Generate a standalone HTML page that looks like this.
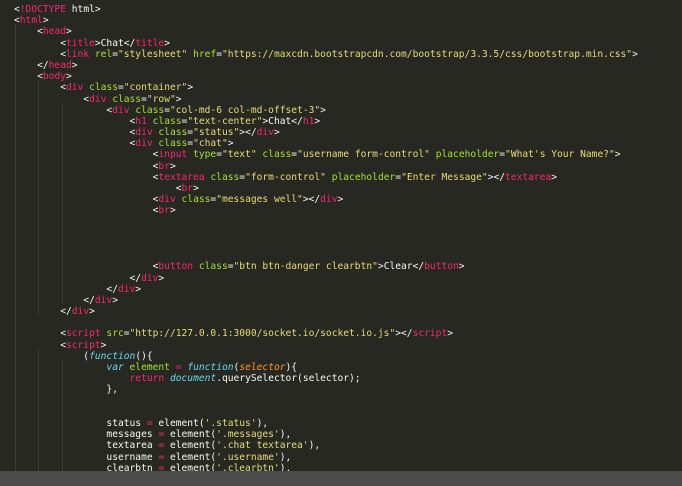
<!DOCTYPE html>
<html><head><style>
html,body{margin:0;padding:0;background:#272822;width:682px;height:486px;overflow:hidden}
pre{margin:0;position:absolute;left:14px;top:4px;font-family:"DejaVu Sans Mono","Liberation Mono",monospace;font-size:9.6px;line-height:11.18px;color:#f8f8f2;white-space:pre}
pre span{line-height:11.18px}
.t{color:#f92672}.a{color:#a6e22e}.s{color:#e6db74}.k{color:#66d9ef;font-style:italic}.p{color:#fd971f;font-style:italic}
.bar{position:absolute;left:0;top:471px;width:682px;height:15px;background:#4b4b4b}
.g{position:absolute;width:1px;background:#3b3c35}
</style></head><body>
<div class="g" style="left:15px;top:24px;height:447px"></div>
<div class="g" style="left:38px;top:80px;height:235px"></div>
<div class="g" style="left:38px;top:348px;height:123px"></div>
<div class="g" style="left:62px;top:104px;height:200px"></div>
<div class="g" style="left:62px;top:360px;height:111px"></div>
<pre>&lt;<span class="t">!DOCTYPE</span> html&gt;
&lt;<span class="t">html</span>&gt;
    &lt;<span class="t">head</span>&gt;
        &lt;<span class="t">title</span>&gt;Chat&lt;/<span class="t">title</span>&gt;
        &lt;<span class="t">link</span> <span class="a">rel</span>=<span class="s">"stylesheet"</span> <span class="a">href</span>=<span class="s">"https://maxcdn.bootstrapcdn.com/bootstrap/3.3.5/css/bootstrap.min.css"</span>&gt;
    &lt;/<span class="t">head</span>&gt;
    &lt;<span class="t">body</span>&gt;
        &lt;<span class="t">div</span> <span class="a">class</span>=<span class="s">"container"</span>&gt;
            &lt;<span class="t">div</span> <span class="a">class</span>=<span class="s">"row"</span>&gt;
                &lt;<span class="t">div</span> <span class="a">class</span>=<span class="s">"col-md-6 col-md-offset-3"</span>&gt;
                    &lt;<span class="t">h1</span> <span class="a">class</span>=<span class="s">"text-center"</span>&gt;Chat&lt;/<span class="t">h1</span>&gt;
                    &lt;<span class="t">div</span> <span class="a">class</span>=<span class="s">"status"</span>&gt;&lt;/<span class="t">div</span>&gt;
                    &lt;<span class="t">div</span> <span class="a">class</span>=<span class="s">"chat"</span>&gt;
                        &lt;<span class="t">input</span> <span class="a">type</span>=<span class="s">"text"</span> <span class="a">class</span>=<span class="s">"username form-control"</span> <span class="a">placeholder</span>=<span class="s">"What's Your Name?"</span>&gt;
                        &lt;<span class="t">br</span>&gt;
                        &lt;<span class="t">textarea</span> <span class="a">class</span>=<span class="s">"form-control"</span> <span class="a">placeholder</span>=<span class="s">"Enter Message"</span>&gt;&lt;/<span class="t">textarea</span>&gt;
                            &lt;<span class="t">br</span>&gt;
                        &lt;<span class="t">div</span> <span class="a">class</span>=<span class="s">"messages well"</span>&gt;&lt;/<span class="t">div</span>&gt;
                        &lt;<span class="t">br</span>&gt;




                        &lt;<span class="t">button</span> <span class="a">class</span>=<span class="s">"btn btn-danger clearbtn"</span>&gt;Clear&lt;/<span class="t">button</span>&gt;
                    &lt;/<span class="t">div</span>&gt;
                &lt;/<span class="t">div</span>&gt;
            &lt;/<span class="t">div</span>&gt;
        &lt;/<span class="t">div</span>&gt;

        &lt;<span class="t">script</span> <span class="a">src</span>=<span class="s">"http://127.0.0.1:3000/socket.io/socket.io.js"</span>&gt;&lt;/<span class="t">script</span>&gt;
        &lt;<span class="t">script</span>&gt;
            (<span class="k">function</span>(){
                <span class="k">var</span> <span class="a">element</span> <span class="t">=</span> <span class="k">function</span>(<span class="p">selector</span>){
                    <span class="t">return</span> <span class="k">document</span>.querySelector(selector);
                },


                status <span class="t">=</span> element(<span class="s">'.status'</span>),
                messages <span class="t">=</span> element(<span class="s">'.messages'</span>),
                textarea <span class="t">=</span> element(<span class="s">'.chat textarea'</span>),
                username <span class="t">=</span> element(<span class="s">'.username'</span>),
                clearbtn <span class="t">=</span> element(<span class="s">'.clearbtn'</span>),</pre>
<div class="bar"></div>
</body></html>
